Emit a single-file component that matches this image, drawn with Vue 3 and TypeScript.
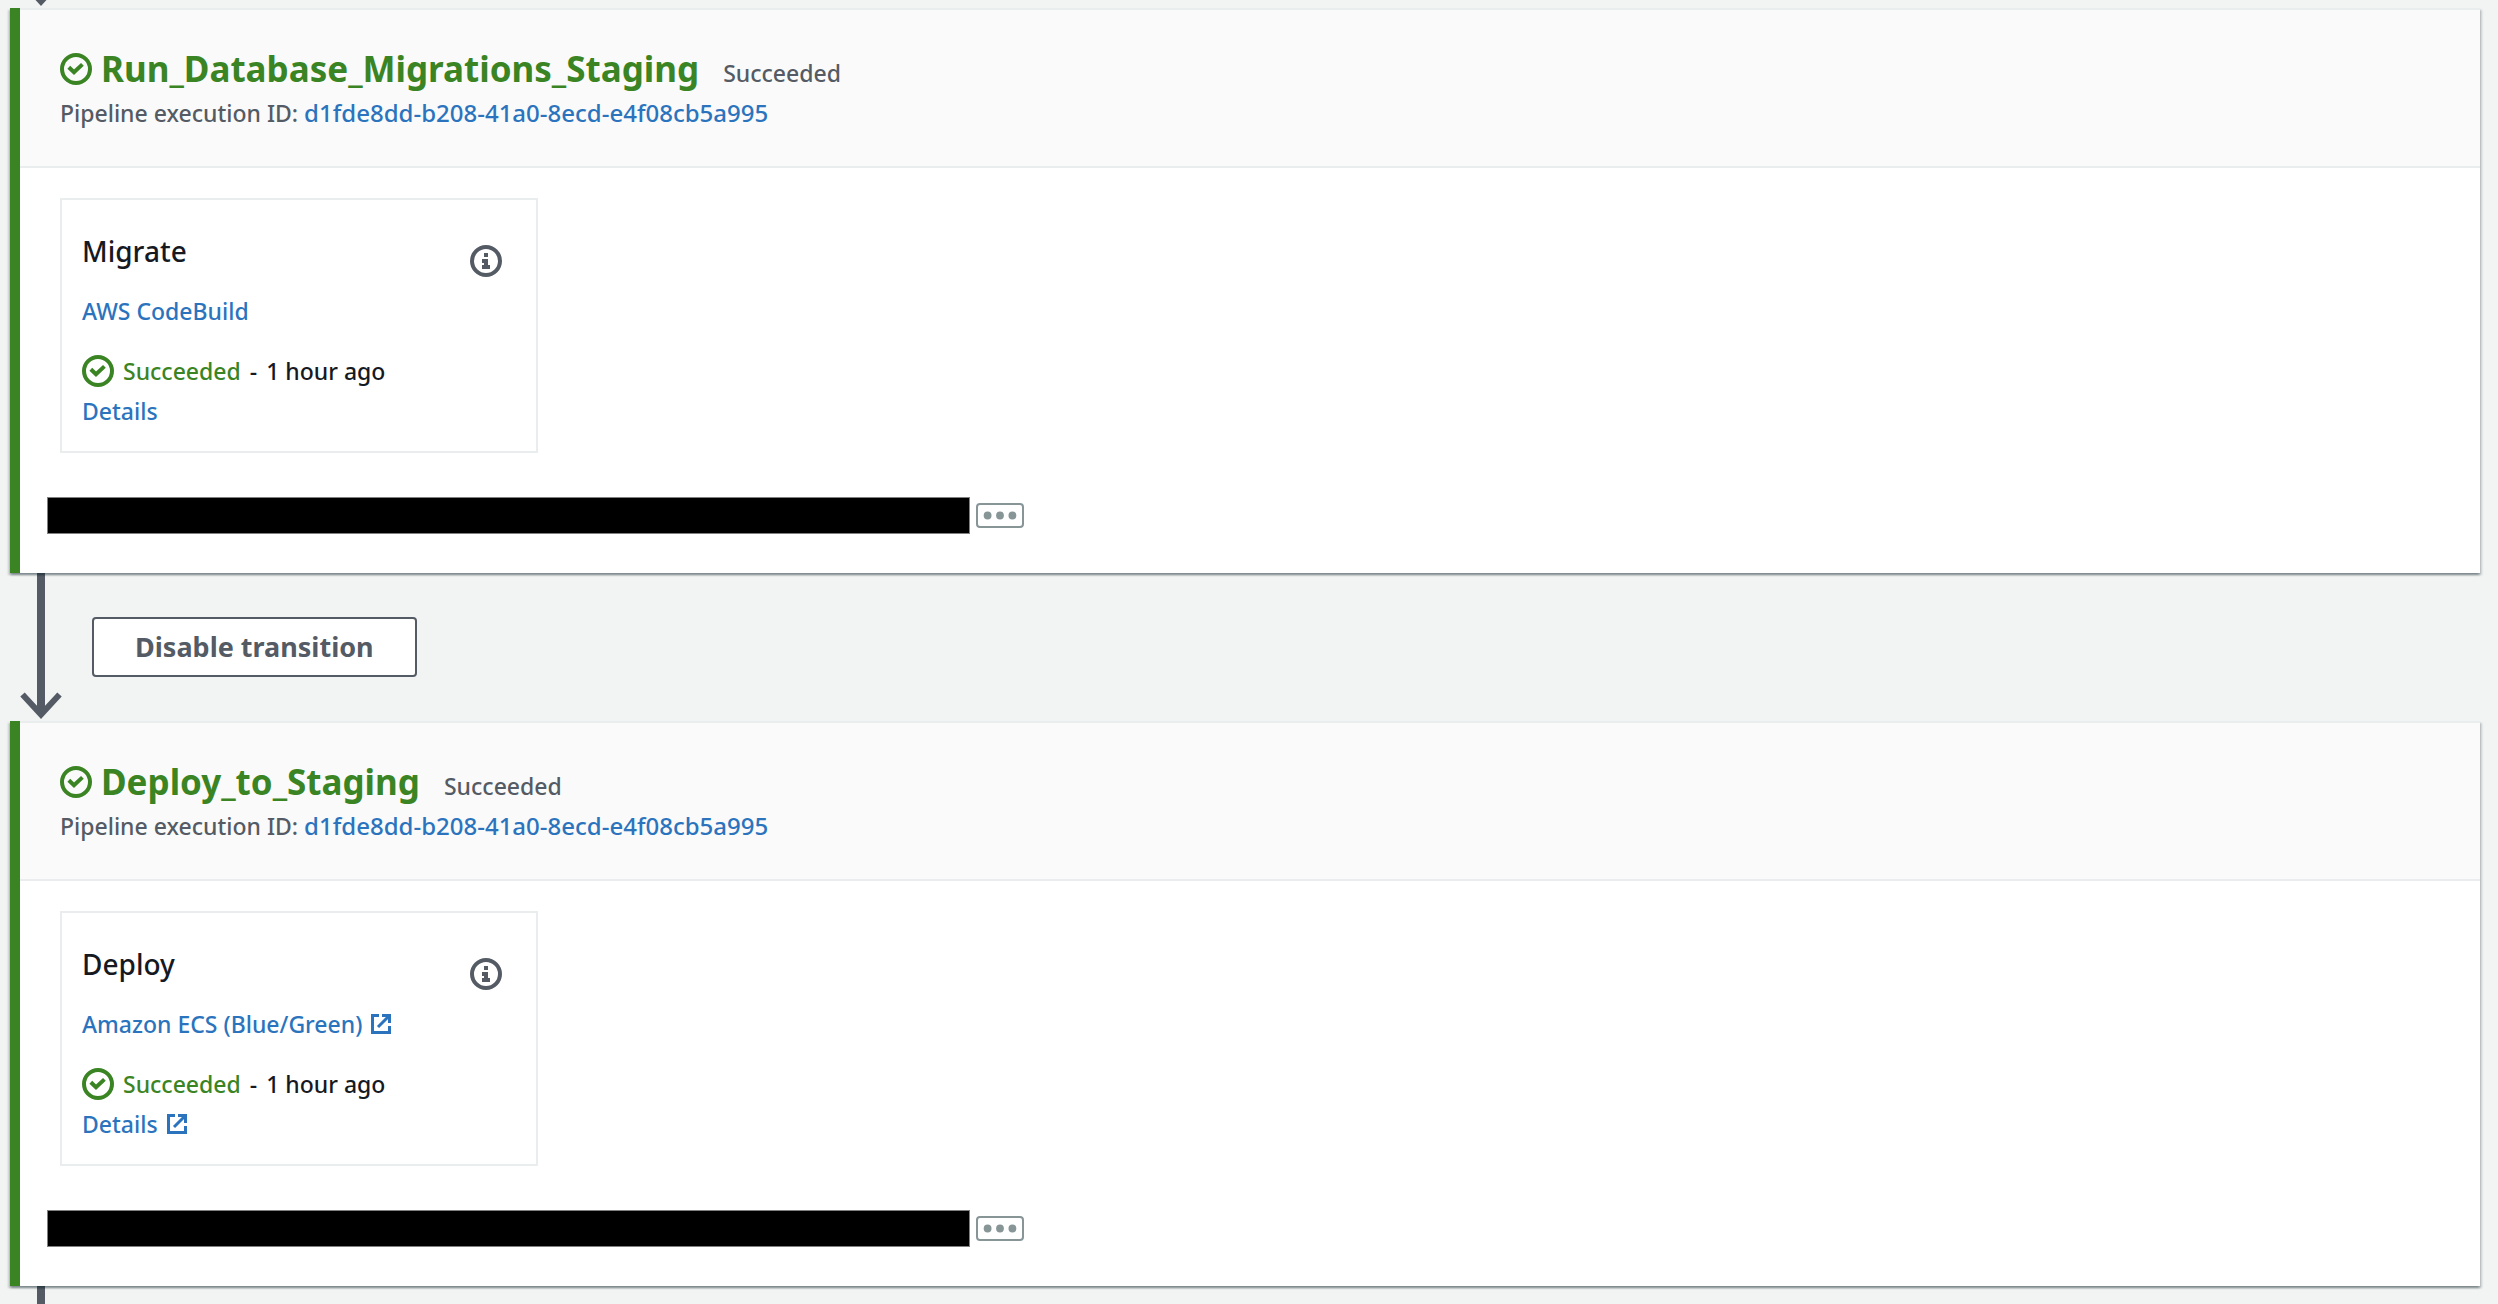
<script setup lang="ts">
interface Stage {
  name: string
  status: string
  executionId: string
  action: string
  provider: string
  external: boolean
  when: string
}

const stages: Stage[] = [
  {
    name: 'Run_Database_Migrations_Staging',
    status: 'Succeeded',
    executionId: 'd1fde8dd-b208-41a0-8ecd-e4f08cb5a995',
    action: 'Migrate',
    provider: 'AWS CodeBuild',
    external: false,
    when: '1 hour ago',
  },
  {
    name: 'Deploy_to_Staging',
    status: 'Succeeded',
    executionId: 'd1fde8dd-b208-41a0-8ecd-e4f08cb5a995',
    action: 'Deploy',
    provider: 'Amazon ECS (Blue/Green)',
    external: true,
    when: '1 hour ago',
  },
]
</script>

<template>
  <main class="pipeline">
    <template v-for="(stage, index) in stages" :key="stage.name">
      <div class="transition" :class="{ 'transition-in': index === 0 }">
        <svg class="arrow" viewBox="0 0 42 148" aria-hidden="true">
          <path d="M21 0V141" stroke-width="8" />
          <path d="M2.5 121.5 21 141.5 39.5 121.5" stroke-width="6" />
        </svg>
        <button v-if="index > 0" type="button" class="transition-button">Disable transition</button>
      </div>

      <section class="stage">
        <header class="stage-header">
          <div class="stage-title">
            <svg class="check" viewBox="0 0 32 32" aria-hidden="true">
              <circle cx="16" cy="16" r="14" />
              <path d="M8.8 14.2 14 19.2 22.4 11.4" />
            </svg>
            <h2>{{ stage.name }}</h2>
            <span class="muted">{{ stage.status }}</span>
          </div>
          <div class="execution">
            <span class="muted">Pipeline execution ID:</span>
            <a class="execution-id" href="#">{{ stage.executionId }}</a>
          </div>
        </header>

        <div class="stage-body">
          <article class="card">
            <div class="card-head">
              <h3>{{ stage.action }}</h3>
              <button type="button" class="info" aria-label="Action information">
                <svg viewBox="0 0 32 32" aria-hidden="true">
                  <circle cx="16" cy="16" r="14" fill="none" stroke="currentColor" stroke-width="4" />
                  <path d="M14 8h4v4h-4zM12 14h6v6h2v4h-8v-4h2v-2h-2z" fill="currentColor" />
                </svg>
              </button>
            </div>
            <a class="row provider" href="#">
              {{ stage.provider }}
              <svg v-if="stage.external" class="external" viewBox="0 0 20 20" aria-hidden="true">
                <path d="M8 1.5H1.5v17h17V12M11 1.5h7.5V9M7 13 18 2" />
              </svg>
            </a>
            <div class="row">
              <svg class="check" viewBox="0 0 32 32" aria-hidden="true">
                <circle cx="16" cy="16" r="14" />
                <path d="M8.8 14.2 14 19.2 22.4 11.4" />
              </svg>
              <span class="success">{{ stage.status }}</span>
              <span>-</span>
              <span>{{ stage.when }}</span>
            </div>
            <a class="row" href="#">
              Details
              <svg v-if="stage.external" class="external" viewBox="0 0 20 20" aria-hidden="true">
                <path d="M8 1.5H1.5v17h17V12M11 1.5h7.5V9M7 13 18 2" />
              </svg>
            </a>
          </article>

          <div class="revision">
            <div class="redacted"></div>
            <button type="button" class="more" aria-label="Show more">
              <svg viewBox="0 0 44 21" aria-hidden="true">
                <circle cx="9.6" cy="10.5" r="3.9" />
                <circle cx="22" cy="10.5" r="3.9" />
                <circle cx="34.4" cy="10.5" r="3.9" />
              </svg>
            </button>
          </div>
        </div>
      </section>
    </template>
    <div class="transition-out"></div>
  </main>
</template>

<style>
body {
  margin: 0;
  background: #f2f3f3;
}
</style>

<style scoped>
.pipeline {
  box-sizing: border-box;
  min-height: 100vh;
  padding: 0 18px 0 10px;
  overflow: hidden;
  background: #f2f3f3;
  color: #16191f;
  font: 500 23px/40px "Noto Sans", "Open Sans", sans-serif;
}

h2,
h3 {
  margin: 0;
}

a {
  color: #2b74bd;
  text-decoration: none;
}

button {
  font: inherit;
  cursor: pointer;
}

svg {
  display: block;
  flex: none;
}

/* Transitions between stages */
.transition {
  display: flex;
  align-items: center;
  height: 148px;
  padding-left: 10px;
}

.transition-in {
  align-items: flex-end;
  height: 8px;
}

.arrow {
  width: 42px;
  height: 148px;
  fill: none;
  stroke: #545b64;
}

.transition-button {
  height: 60px;
  margin-left: 30px;
  padding: 0 41px;
  border: 2px solid #545b64;
  border-radius: 4px;
  background: #fff;
  color: #545b64;
  font-size: 27px;
  font-weight: 700;
}

.transition-out {
  width: 8px;
  height: 18px;
  margin-left: 27px;
  background: #545b64;
}

/* Stage */
.stage {
  position: relative;
  border-left: 10px solid #3a8424;
  background: #fff;
  box-shadow:
    0 2px 2px 0 rgba(0, 28, 36, 0.3),
    2px 2px 2px 0 rgba(0, 28, 36, 0.15),
    -2px 2px 2px 0 rgba(0, 28, 36, 0.15);
}

.stage-header {
  padding: 35px 40px 33px;
  border-top: 2px solid #eaeded;
  border-bottom: 2px solid #eaeded;
  background: #fafafa;
}

.stage-title {
  display: flex;
  align-items: baseline;
  height: 48px;
  line-height: 48px;
}

.stage-title .check {
  align-self: center;
  margin-right: 9px;
}

h2 {
  margin-right: 24px;
  color: #3a8424;
  font-size: 35px;
  font-weight: 700;
  line-height: 48px;
}

.muted {
  color: #545b64;
}

.execution {
  display: flex;
  align-items: baseline;
  gap: 6px;
  height: 40px;
}

.execution-id {
  font-size: 24px;
}

.check {
  width: 32px;
  height: 32px;
  fill: none;
  stroke: #3a8424;
  stroke-width: 4;
}

.stage-body {
  padding: 30px 40px 39px;
}

/* Action card */
.card {
  box-sizing: border-box;
  width: 478px;
  max-width: 100%;
  padding: 31px 34px 20px 20px;
  border: 2px solid #eaeded;
}

.card-head {
  display: flex;
  justify-content: space-between;
  align-items: flex-start;
  height: 60px;
}

h3 {
  font-size: 28px;
  font-weight: 500;
  line-height: 40px;
}

.info {
  width: 32px;
  height: 32px;
  margin-top: 14px;
  padding: 0;
  border: 0;
  background: none;
  color: #545b64;
}

.row {
  display: flex;
  align-items: center;
  gap: 9px;
  width: fit-content;
  height: 40px;
}

.provider {
  margin-bottom: 20px;
}

.success {
  color: #3a8424;
}

.external {
  width: 20px;
  height: 20px;
  fill: none;
  stroke: currentColor;
  stroke-width: 3;
}

/* Source revision */
.revision {
  display: flex;
  align-items: center;
  gap: 6px;
  margin: 44px 0 0 -13px;
}

.redacted {
  box-sizing: border-box;
  width: 923px;
  height: 37px;
  border: 1px solid #808080;
  background: #000;
}

.more {
  box-sizing: border-box;
  width: 48px;
  height: 25px;
  padding: 0;
  border: 2px solid #879596;
  border-radius: 4px;
  background: #fff;
}

.more svg {
  fill: #879596;
}
</style>
